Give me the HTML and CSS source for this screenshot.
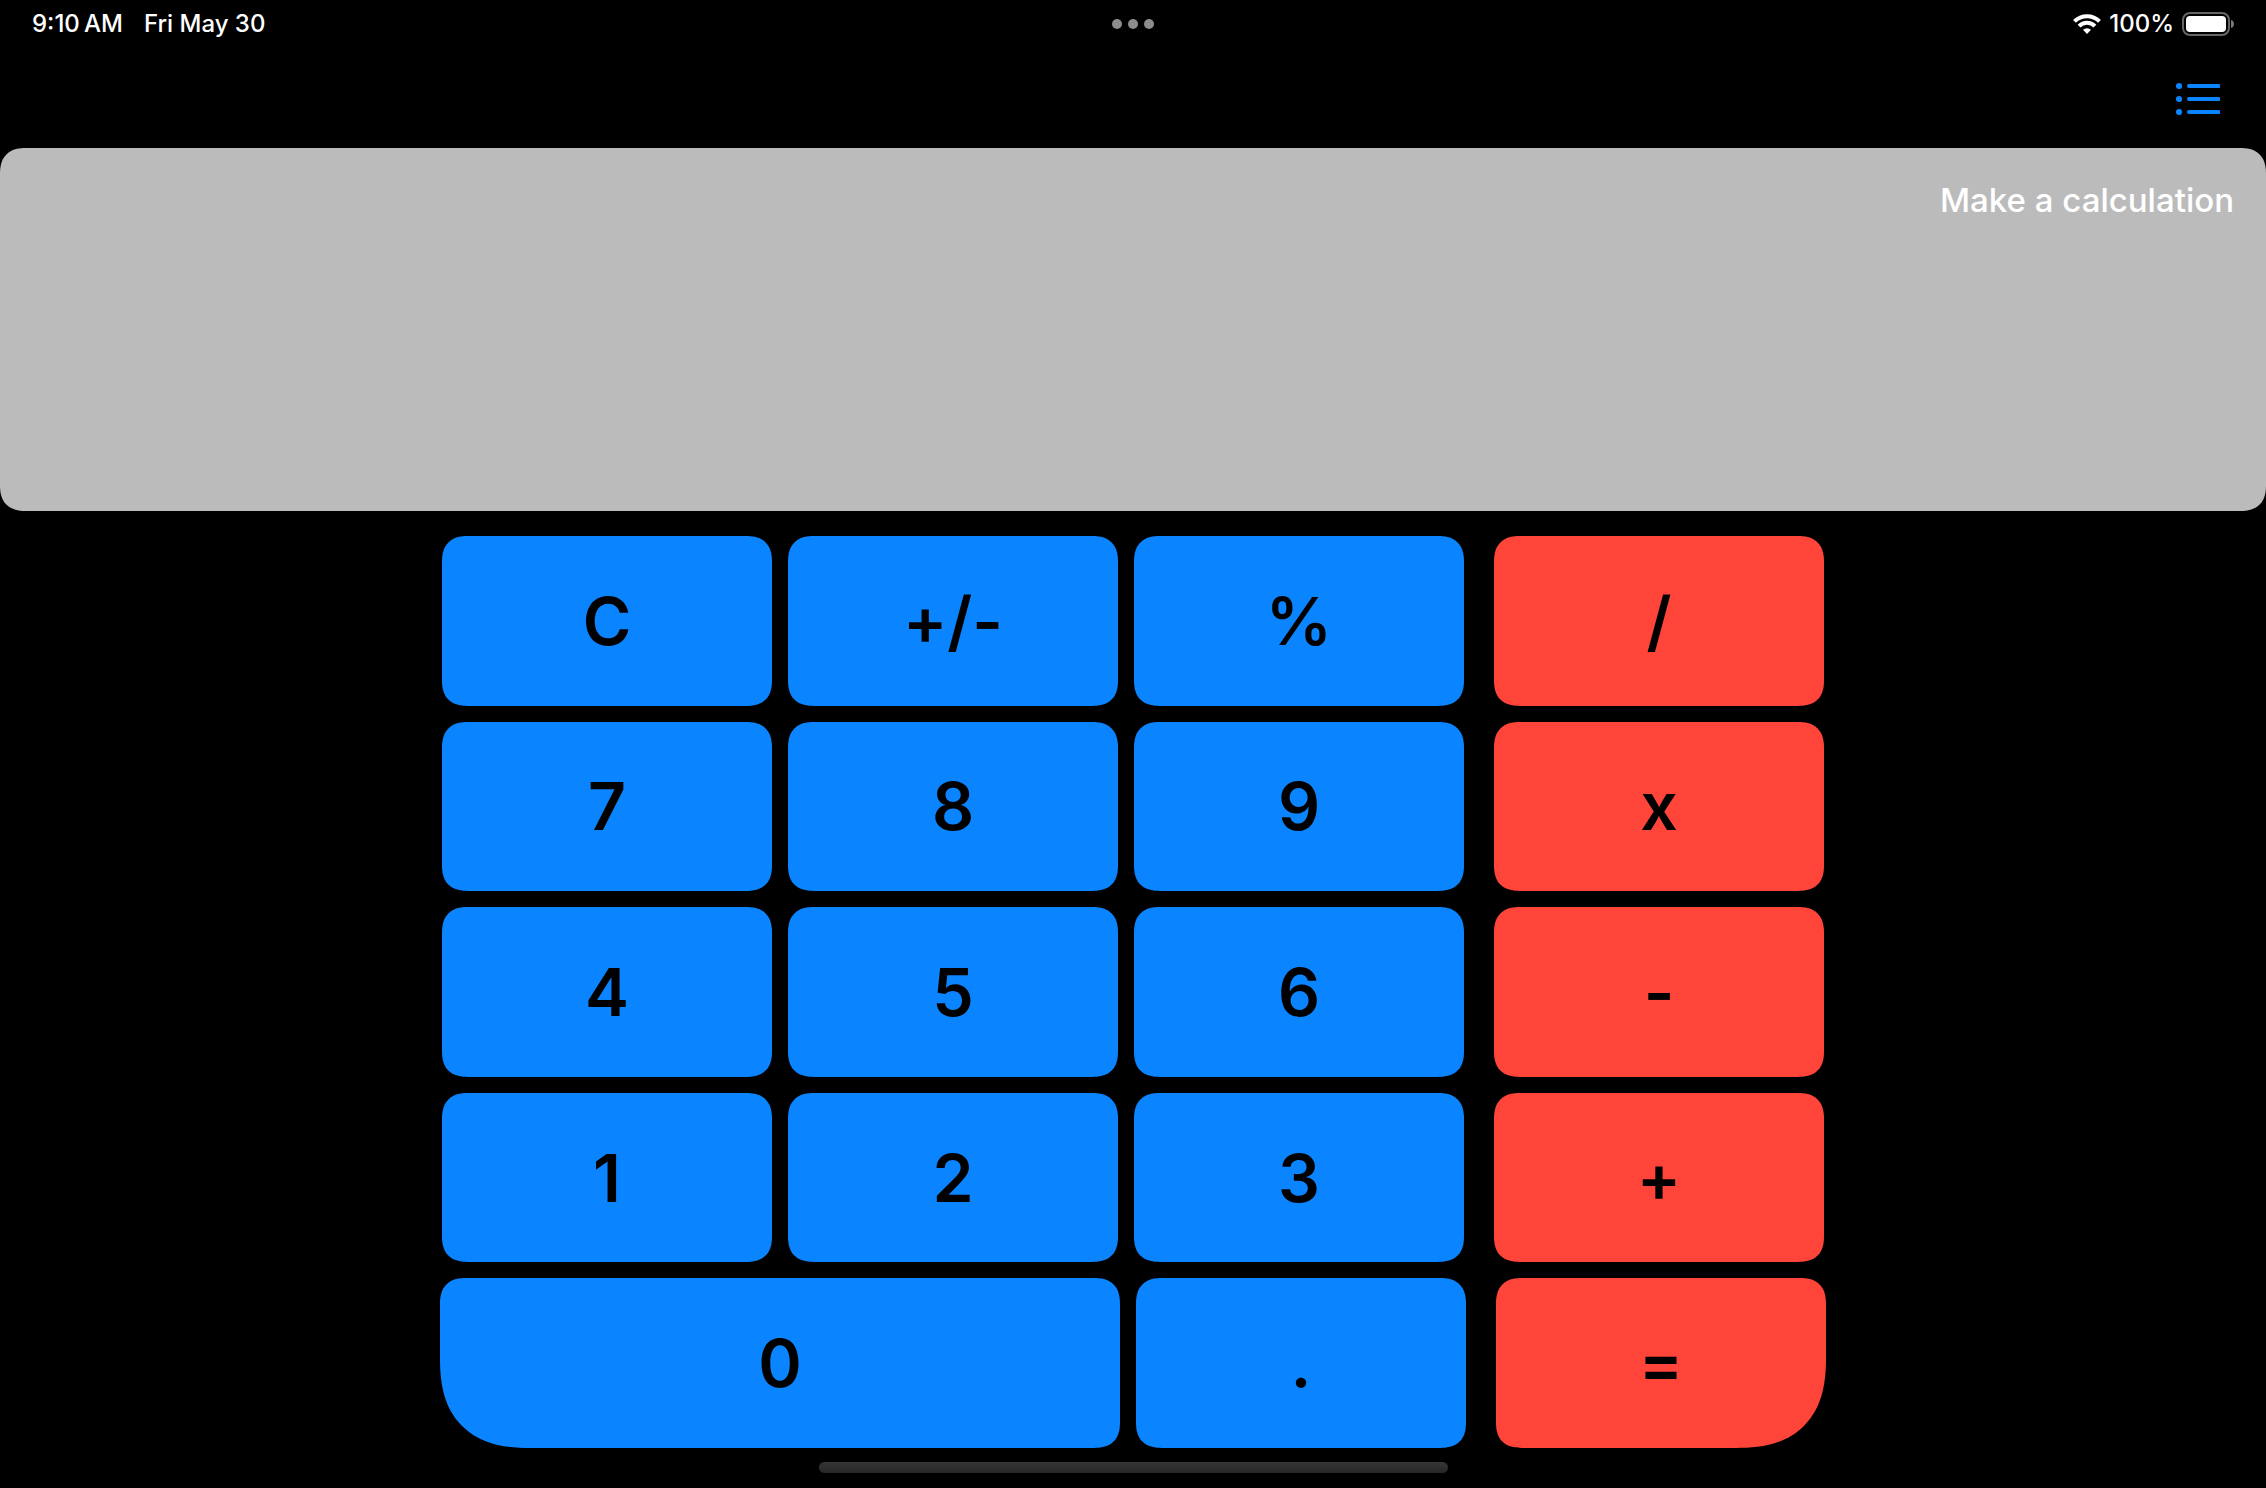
FILE: index.html
```html
<!DOCTYPE html>
<html lang="en">
<head>
<meta charset="utf-8">
<meta name="viewport" content="width=device-width, initial-scale=1">
<title>Calculator</title>
<link rel="stylesheet" href="styles.css">
</head>
<body>
<div class="app">
  <header class="status">
    <div class="status-left">
      <time class="clock">9:10&#8201;AM</time>
      <span>Fri May 30</span>
    </div>
    <svg class="dots" width="42" height="10" viewBox="0 0 42 10" aria-hidden="true">
      <circle cx="5" cy="5" r="5"/><circle cx="21" cy="5" r="5"/><circle cx="37" cy="5" r="5"/>
    </svg>
    <div class="status-right">
      <svg width="28" height="20" viewBox="0 0 28 20" aria-hidden="true">
        <g fill="none" stroke="#fff" stroke-width="4">
          <path d="M1.500 7.400a17.600 17.600 0 0 1 25 0"/>
          <path d="M6.100 12.200a11 11 0 0 1 15.800 0"/>
        </g>
        <path d="M14 20l-4-4.200a5.800 5.800 0 0 1 8 0z" fill="#fff"/>
      </svg>
      <span class="percent">100%</span>
      <svg width="52" height="24" viewBox="0 0 52 24" aria-hidden="true">
        <rect x="1" y="1" width="46" height="22" rx="7" fill="none" stroke="#666" stroke-width="2"/>
        <rect x="4" y="4" width="40" height="16" rx="4" fill="#fff"/>
        <path d="M49 8c4 1 4 7 0 8z" fill="#777"/>
      </svg>
    </div>
  </header>
  <nav class="toolbar">
    <button class="history" type="button" aria-label="History">
      <svg width="44" height="34" viewBox="0 0 44 34" aria-hidden="true">
        <g fill="#0a84ff"><circle cx="3" cy="4" r="3.100"/><circle cx="3" cy="17" r="3.100"/><circle cx="3" cy="30" r="3.100"/></g>
        <path d="M13 4h29.500M13 17h29.500M13 30h29.500" stroke="#0a84ff" stroke-width="4" stroke-linecap="round"/>
      </svg>
    </button>
  </nav>
  <output class="display">Make a calculation</output>
  <main class="keypad">
    <div class="row">
      <button class="key" type="button">C</button>
      <button class="key" type="button">+/-</button>
      <button class="key" type="button">%</button>
      <button class="key operator" type="button">/</button>
    </div>
    <div class="row">
      <button class="key" type="button">7</button>
      <button class="key" type="button">8</button>
      <button class="key" type="button">9</button>
      <button class="key operator" type="button">x</button>
    </div>
    <div class="row">
      <button class="key" type="button">4</button>
      <button class="key" type="button">5</button>
      <button class="key" type="button">6</button>
      <button class="key operator" type="button">-</button>
    </div>
    <div class="row">
      <button class="key" type="button">1</button>
      <button class="key" type="button">2</button>
      <button class="key" type="button">3</button>
      <button class="key operator" type="button">+</button>
    </div>
    <div class="row last">
      <button class="key zero" type="button">0</button>
      <button class="key" type="button">.</button>
      <button class="key operator equals" type="button">=</button>
    </div>
  </main>
  <footer class="home"><div class="home-bar"></div></footer>
</div>
</body>
</html>
```
FILE: styles.css
```css
* { box-sizing: border-box; }

:root {
  --corner: 20px;
  --corner-large: 68px;
}

/* Continuous corners start further along the edge than circular ones */
@supports (corner-shape: superellipse(1.3)) {
  :root {
    --corner: 26px;
    --corner-large: 90px;
  }

  .display,
  .key { corner-shape: superellipse(1.3); }
}

body {
  margin: 0;
  background: #000;
  color: #fff;
  font-family: Inter, "Liberation Sans", sans-serif;
}

button {
  border: 0;
  padding: 0;
  background: none;
  font: inherit;
  cursor: pointer;
}

svg { display: block; }

.app {
  display: flex;
  flex-direction: column;
  min-height: 100vh;
}

.status {
  display: grid;
  grid-template-columns: 1fr auto 1fr;
  align-items: center;
  height: 48px;
  padding: 0 32px;
  font-size: 24px;
  font-weight: 500;
  line-height: 32px;
}

.status-left {
  display: flex;
  gap: 21px;
}

.dots { fill: #8c8c8c; }

.status-right {
  display: flex;
  align-items: center;
  justify-content: flex-end;
  gap: 8px;
}

.toolbar {
  display: flex;
  align-items: center;
  justify-content: flex-end;
  height: 100px;
  padding: 2px 46px 0 0;
}

.display {
  display: block;
  flex: 299 0 0;
  padding: 32px;
  border-radius: var(--corner);
  background: #bbb;
  font-size: 33px;
  font-weight: 500;
  line-height: 40px;
  text-align: right;
}

.keypad {
  display: flex;
  flex: 912 0 0;
  flex-direction: column;
  gap: 16px;
  width: 100%;
  max-width: 1386px;
  margin: 25px auto 0;
}

.row {
  display: flex;
  flex: 1;
  gap: 16px;
  padding: 0 2px;
}

.last { padding: 0; }

.key {
  flex: 330 0 0;
  border-radius: var(--corner);
  background: #0a84ff;
  color: #000;
  font-size: 66px;
  font-weight: 600;
  font-variant-ligatures: no-contextual;
  line-height: 80px;
}

.operator {
  margin-left: 14px;
  background: #ff453a;
}

.zero {
  flex-grow: 680;
  border-bottom-left-radius: var(--corner-large);
}

.equals { border-bottom-right-radius: var(--corner-large); }

.home {
  display: flex;
  justify-content: center;
  padding: 14px 0 15px;
}

.home-bar {
  width: 629px;
  height: 11px;
  border-radius: 6px;
  background: linear-gradient(#363636, #272727);
}
```
